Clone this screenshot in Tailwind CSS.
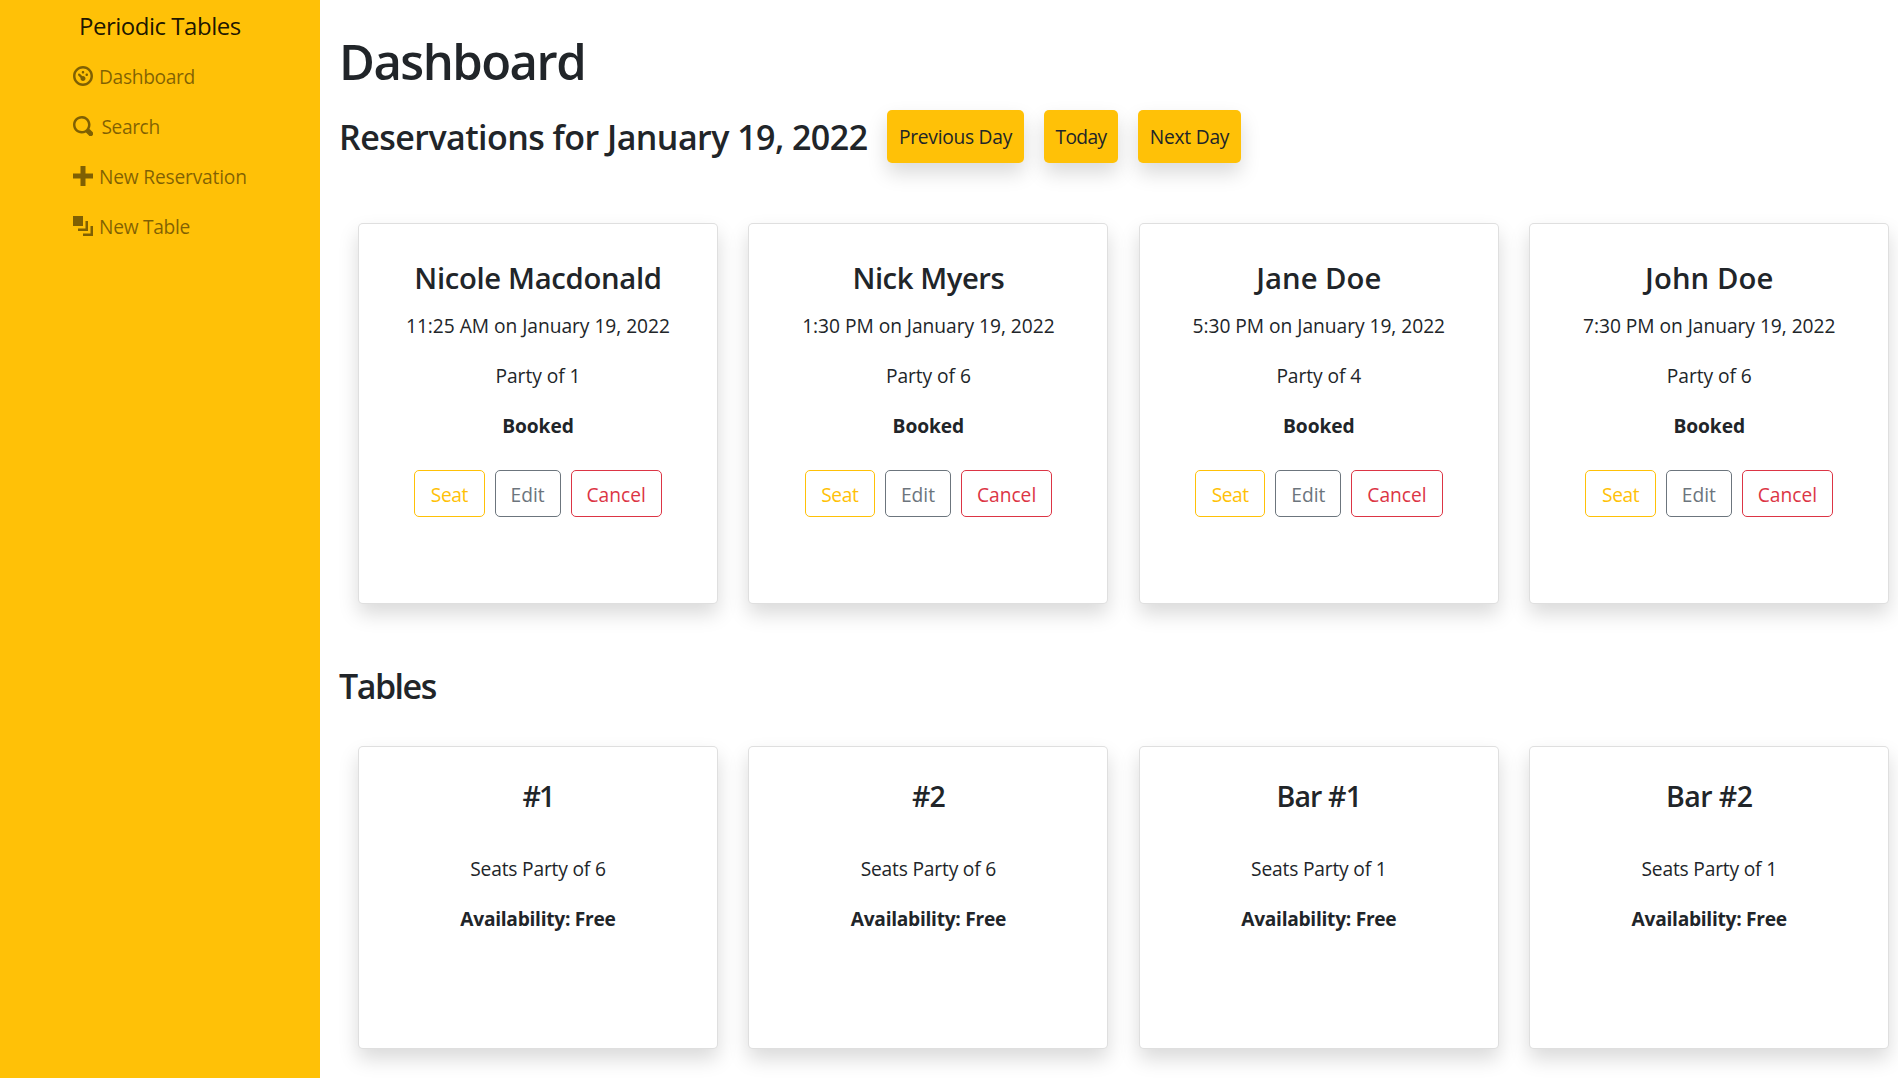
<!DOCTYPE html>
<html lang="en">
<head>
<meta charset="utf-8">
<title>Periodic Tables</title>
<script src="https://cdn.jsdelivr.net/npm/@tailwindcss/browser@4"></script>
</head>
<body class="flex h-[1078px] overflow-hidden bg-white font-['Open_Sans','Noto_Sans',sans-serif] text-[19.2px] leading-[30px] font-normal text-[#212529]">
<nav class="w-[320px] shrink-0 bg-[#ffc107] text-black/50">
  <a class="block pt-[7px] pl-[79px] text-[24px] leading-[38px] tracking-[-0.02em] text-black/90">Periodic Tables</a>
  <ul class="mt-[17px] flex flex-col gap-5 pl-[73px]">
    <li class="flex items-center gap-1.5 tracking-[-0.0174em]"><svg class="mb-0.5 size-5" viewBox="0 0 8 8" fill="currentColor"><path d="M4 0c-2.2 0-4 1.8-4 4s1.8 4 4 4 4-1.8 4-4-1.8-4-4-4zm0 1c1.66 0 3 1.34 3 3s-1.34 3-3 3-3-1.34-3-3 1.34-3 3-3zm0 1c-.28 0-.5.22-.5.5s.22.5.5.5.5-.22.5-.5-.22-.5-.5-.5zm-1.66 1a.5.5 0 0 0-.19.84l.91.91c-.02.08-.06.16-.06.25 0 .55.45 1 1 1s1-.45 1-1-.45-1-1-1c-.09 0-.17.04-.25.06l-.91-.91a.5.5 0 0 0-.44-.16.5.5 0 0 0-.06 0zm3.16 0c-.28 0-.5.22-.5.5s.22.5.5.5.5-.22.5-.5-.22-.5-.5-.5z"/></svg>Dashboard</li>
    <li class="flex items-center gap-[8.5px] tracking-[-0.022em]"><svg class="mb-0.5 size-5" viewBox="0 0 8 8" fill="currentColor"><path d="M3.5 0c-1.93 0-3.5 1.57-3.5 3.5s1.57 3.5 3.5 3.5c.59 0 1.17-.14 1.66-.41a1 1 0 0 0 .13.13l1 1a1.02 1.02 0 1 0 1.44-1.44l-1-1a1 1 0 0 0-.16-.13c.27-.49.44-1.06.44-1.66 0-1.93-1.55-3.5-3.5-3.5zm0 1c1.39 0 2.5 1.11 2.5 2.5 0 .66-.24 1.27-.66 1.72l-.03.03a1 1 0 0 0-.13.13c-.44.4-1.04.63-1.69.63-1.39 0-2.5-1.11-2.5-2.5s1.11-2.5 2.5-2.5z"/></svg>Search</li>
    <li class="flex items-center gap-1.5 tracking-[-0.0104em]"><svg class="mb-0.5 size-5" viewBox="0 0 8 8" fill="currentColor"><path d="M3 0v3h-3v2h3v3h2v-3h3v-2h-3v-3h-2z"/></svg>New Reservation</li>
    <li class="flex items-center gap-1.5 tracking-[-0.0149em]"><svg class="mb-0.5 size-5" viewBox="0 0 8 8" fill="currentColor"><path d="M0 0v4h4v-4h-4zm5 2v3h-3v1h4v-4h-1zm2 2v3h-3v1h4v-4h-1z"/></svg>New Table</li>
  </ul>
</nav>
<main class="w-[1578px] shrink-0 pt-[31px] pl-[19px]">
  <h1 class="text-[49px] leading-[60px] font-semibold tracking-[-0.031em]">Dashboard</h1>
  <div class="mt-[19px] flex h-[53px] items-center">
    <h2 class="w-[548px] text-[34px] leading-[42px] font-semibold tracking-[-0.016em] whitespace-nowrap">Reservations for January 19, 2022</h2>
    <div class="flex gap-5">
      <button class="h-[53px] w-[137px] rounded-[5px] bg-[#ffc107] tracking-[-0.0141em] shadow-[0_10px_20px_rgba(0,0,0,0.15)]">Previous Day</button>
      <button class="h-[53px] w-[74px] rounded-[5px] bg-[#ffc107] tracking-[-0.032em] shadow-[0_10px_20px_rgba(0,0,0,0.15)]">Today</button>
      <button class="h-[53px] w-[103px] rounded-[5px] bg-[#ffc107] tracking-[-0.0119em] shadow-[0_10px_20px_rgba(0,0,0,0.15)]">Next Day</button>
    </div>
  </div>
  <section class="mt-[60px] ml-[19px] grid w-[1531.2px] grid-cols-4 gap-[30.5px] text-center">
    <article class="h-[380.5px] rounded-[5px] border border-black/[0.125] bg-white pt-9 shadow-[0_10px_20px_rgba(0,0,0,0.15)]">
      <h3 class="text-[29.25px] leading-9 font-semibold tracking-[-0.011em]">Nicole Macdonald</h3>
      <p class="mt-[15px] tracking-[-0.0015em]">11:25 AM on January 19, 2022</p>
      <p class="mt-5 tracking-[-0.003em]">Party of 1</p>
      <p class="mt-5 font-bold tracking-[-0.004em]">Booked</p>
      <div class="mt-[29px] flex justify-center gap-2.5">
        <button class="h-[47px] w-[70.4px] rounded-[5px] border border-[#ffc107] pt-0.5 tracking-[-0.0226em] text-[#ffc107]">Seat</button>
        <button class="h-[47px] w-[66px] rounded-[5px] border border-[#6c757d] pt-0.5 text-[#6c757d]">Edit</button>
        <button class="h-[47px] w-[91.2px] rounded-[5px] border border-[#dc3545] pt-0.5 text-[#dc3545]">Cancel</button>
      </div>
    </article>
    <article class="h-[380.5px] rounded-[5px] border border-black/[0.125] bg-white pt-9 shadow-[0_10px_20px_rgba(0,0,0,0.15)]">
      <h3 class="text-[29.25px] leading-9 font-semibold tracking-[-0.015em]">Nick Myers</h3>
      <p class="mt-[15px] tracking-[-0.0015em]">1:30 PM on January 19, 2022</p>
      <p class="mt-5 tracking-[-0.003em]">Party of 6</p>
      <p class="mt-5 font-bold tracking-[-0.004em]">Booked</p>
      <div class="mt-[29px] flex justify-center gap-2.5">
        <button class="h-[47px] w-[70.4px] rounded-[5px] border border-[#ffc107] pt-0.5 tracking-[-0.0226em] text-[#ffc107]">Seat</button>
        <button class="h-[47px] w-[66px] rounded-[5px] border border-[#6c757d] pt-0.5 text-[#6c757d]">Edit</button>
        <button class="h-[47px] w-[91.2px] rounded-[5px] border border-[#dc3545] pt-0.5 text-[#dc3545]">Cancel</button>
      </div>
    </article>
    <article class="h-[380.5px] rounded-[5px] border border-black/[0.125] bg-white pt-9 shadow-[0_10px_20px_rgba(0,0,0,0.15)]">
      <h3 class="text-[29.25px] leading-9 font-semibold">Jane Doe</h3>
      <p class="mt-[15px] tracking-[-0.0015em]">5:30 PM on January 19, 2022</p>
      <p class="mt-5 tracking-[-0.003em]">Party of 4</p>
      <p class="mt-5 font-bold tracking-[-0.004em]">Booked</p>
      <div class="mt-[29px] flex justify-center gap-2.5">
        <button class="h-[47px] w-[70.4px] rounded-[5px] border border-[#ffc107] pt-0.5 tracking-[-0.0226em] text-[#ffc107]">Seat</button>
        <button class="h-[47px] w-[66px] rounded-[5px] border border-[#6c757d] pt-0.5 text-[#6c757d]">Edit</button>
        <button class="h-[47px] w-[91.2px] rounded-[5px] border border-[#dc3545] pt-0.5 text-[#dc3545]">Cancel</button>
      </div>
    </article>
    <article class="h-[380.5px] rounded-[5px] border border-black/[0.125] bg-white pt-9 shadow-[0_10px_20px_rgba(0,0,0,0.15)]">
      <h3 class="text-[29.25px] leading-9 font-semibold tracking-[0.003em]">John Doe</h3>
      <p class="mt-[15px] tracking-[-0.0015em]">7:30 PM on January 19, 2022</p>
      <p class="mt-5 tracking-[-0.003em]">Party of 6</p>
      <p class="mt-5 font-bold tracking-[-0.004em]">Booked</p>
      <div class="mt-[29px] flex justify-center gap-2.5">
        <button class="h-[47px] w-[70.4px] rounded-[5px] border border-[#ffc107] pt-0.5 tracking-[-0.0226em] text-[#ffc107]">Seat</button>
        <button class="h-[47px] w-[66px] rounded-[5px] border border-[#6c757d] pt-0.5 text-[#6c757d]">Edit</button>
        <button class="h-[47px] w-[91.2px] rounded-[5px] border border-[#dc3545] pt-0.5 text-[#dc3545]">Cancel</button>
      </div>
    </article>
  </section>
  <h2 class="mt-[61.5px] text-[34px] leading-[42px] font-semibold tracking-[-0.044em]">Tables</h2>
  <section class="mt-[39px] ml-[19px] grid w-[1531.2px] grid-cols-4 gap-[30.5px] text-center">
    <article class="h-[302.5px] rounded-[5px] border border-black/[0.125] bg-white pt-[31px] shadow-[0_10px_20px_rgba(0,0,0,0.15)]">
      <h3 class="text-[28.5px] leading-9 font-semibold tracking-[-0.07em]">#1</h3>
      <p class="mt-10 tracking-[-0.0095em]">Seats Party of 6</p>
      <p class="mt-5 font-bold tracking-[-0.0148em]">Availability: Free</p>
    </article>
    <article class="h-[302.5px] rounded-[5px] border border-black/[0.125] bg-white pt-[31px] shadow-[0_10px_20px_rgba(0,0,0,0.15)]">
      <h3 class="text-[28.5px] leading-9 font-semibold tracking-[-0.03em]">#2</h3>
      <p class="mt-10 tracking-[-0.0095em]">Seats Party of 6</p>
      <p class="mt-5 font-bold tracking-[-0.0148em]">Availability: Free</p>
    </article>
    <article class="h-[302.5px] rounded-[5px] border border-black/[0.125] bg-white pt-[31px] shadow-[0_10px_20px_rgba(0,0,0,0.15)]">
      <h3 class="text-[28.5px] leading-9 font-semibold tracking-[-0.03em]">Bar #1</h3>
      <p class="mt-10 tracking-[-0.0095em]">Seats Party of 1</p>
      <p class="mt-5 font-bold tracking-[-0.0148em]">Availability: Free</p>
    </article>
    <article class="h-[302.5px] rounded-[5px] border border-black/[0.125] bg-white pt-[31px] shadow-[0_10px_20px_rgba(0,0,0,0.15)]">
      <h3 class="text-[28.5px] leading-9 font-semibold tracking-[-0.02em]">Bar #2</h3>
      <p class="mt-10 tracking-[-0.0095em]">Seats Party of 1</p>
      <p class="mt-5 font-bold tracking-[-0.0148em]">Availability: Free</p>
    </article>
  </section>
</main>
</body>
</html>
